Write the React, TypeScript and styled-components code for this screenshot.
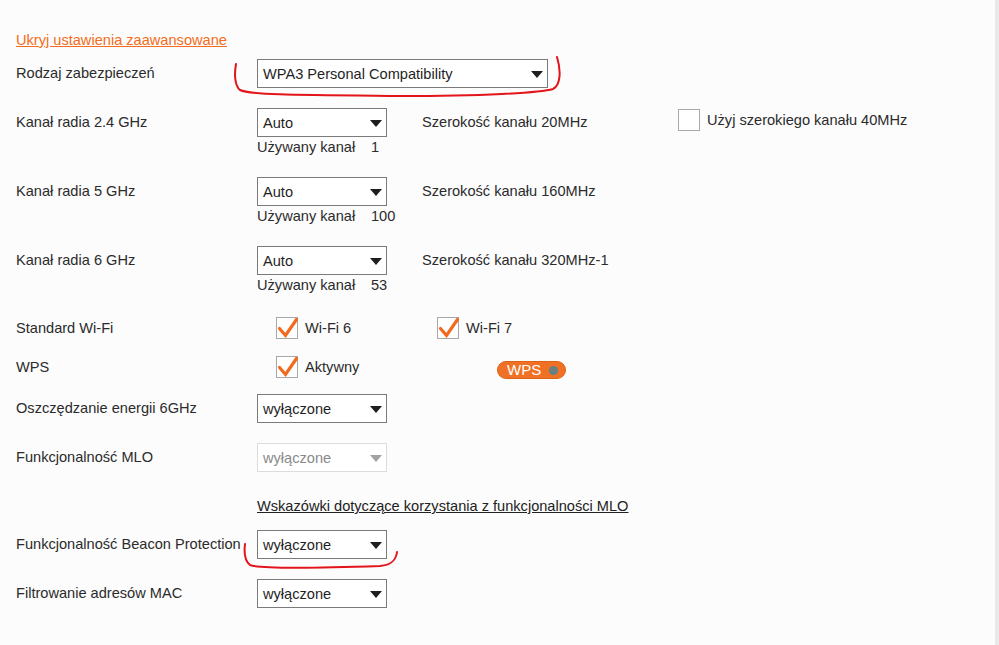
import React from "react";
import styled, { createGlobalStyle } from "styled-components";

const GlobalStyle = createGlobalStyle`
  html, body { margin: 0; padding: 0; }
  body {
    background: #fcfcfc;
    font-family: "Liberation Sans", Arial, sans-serif;
    font-size: 14.6px;
    color: #2b2b2b;
  }
`;

const Page = styled.div`
  position: relative;
  box-sizing: border-box;
  width: 999px;
  min-height: 645px;
  padding: 32px 0 0 16px;
  border-right: 4px solid #e9e9e9;
`;

const AdvancedLink = styled.a`
  display: block;
  line-height: 16px;
  color: #f36c21;
  text-decoration: underline;
  cursor: pointer;
  width: max-content;
`;

const Row = styled.div<{ $gap: number }>`
  display: grid;
  grid-template-columns: 241px 1fr;
  align-items: start;
  margin-top: ${(p) => p.$gap}px;
`;

const Label = styled.div<{ $lh?: number }>`
  line-height: ${(p) => p.$lh ?? 29}px;
  color: #2b2b2b;
  white-space: nowrap;
`;

const Controls = styled.div`
  display: flex;
  align-items: flex-start;
`;

const SelectCol = styled.div`
  width: 165px;
  flex: none;
`;

const SelectBox = styled.div<{ $width: number; $disabled?: boolean }>`
  box-sizing: border-box;
  width: ${(p) => p.$width}px;
  height: 29px;
  display: flex;
  align-items: center;
  justify-content: space-between;
  padding: 0 4px 0 5px;
  background: #fff;
  border: 1px solid ${(p) => (p.$disabled ? "#dcdcdc" : "#7b7b7b")};
  color: ${(p) => (p.$disabled ? "#8a8a8a" : "#1f1f1f")};
`;

const Arrow = styled.span<{ $disabled?: boolean }>`
  width: 0;
  height: 0;
  border-left: 6.5px solid transparent;
  border-right: 6.5px solid transparent;
  border-top: 7px solid ${(p) => (p.$disabled ? "#a3a3a3" : "#1e1e1e")};
  margin-top: 1px;
`;

const UsedChannel = styled.div`
  display: flex;
  line-height: 20px;
`;

const UsedLabel = styled.span`
  width: 114px;
`;

const InfoText = styled.div`
  width: 256px;
  flex: none;
  line-height: 29px;
`;

const CheckItem = styled.label<{ $indent?: number; $width?: number }>`
  display: flex;
  align-items: center;
  gap: 7px;
  margin-left: ${(p) => p.$indent ?? 0}px;
  width: ${(p) => (p.$width ? `${p.$width}px` : "auto")};
  flex: none;
  line-height: 24px;
`;

const CheckBox = styled.span`
  position: relative;
  box-sizing: border-box;
  flex: none;
  width: 22px;
  height: 22px;
  background: #fff;
  border: 1px solid #a8a8a8;
`;

const CheckMark = styled.svg`
  position: absolute;
  left: -1px;
  top: -1px;
  overflow: visible;
`;

const WpsBadge = styled.div`
  display: flex;
  align-items: center;
  gap: 8px;
  box-sizing: border-box;
  height: 18px;
  margin-top: 6px;
  padding: 0 7px 0 9px;
  border-radius: 9px;
  background: #f07125;
  border: 1px solid #dc6418;
  color: #fff;
  font-size: 15px;
  line-height: 16px;
`;

const WpsDot = styled.span`
  width: 9px;
  height: 9px;
  box-sizing: border-box;
  border-radius: 50%;
  background: #6f7c82;
  border: 1.5px solid #3f8c96;
`;

const HelpLink = styled.a`
  display: block;
  margin: 24px 0 0 241px;
  line-height: 20px;
  color: #222;
  text-decoration: underline;
  width: max-content;
  cursor: pointer;
`;

const Annotations = styled.svg`
  position: absolute;
  left: 0;
  top: 0;
  pointer-events: none;
`;

const Select = ({
  value,
  width = 130,
  disabled,
}: {
  value: string;
  width?: number;
  disabled?: boolean;
}) => (
  <SelectBox $width={width} $disabled={disabled}>
    <span>{value}</span>
    <Arrow $disabled={disabled} />
  </SelectBox>
);

const Check = ({ checked }: { checked?: boolean }) => (
  <CheckBox>
    {checked && (
      <CheckMark width={22} height={22} viewBox="0 0 22 22">
        <path
          d="M3.5 11.5 L9.5 18.5 L20.5 2.5"
          fill="none"
          stroke="#f26a1b"
          strokeWidth="3.2"
          strokeLinecap="round"
          strokeLinejoin="miter"
        />
      </CheckMark>
    )}
  </CheckBox>
);

const radios = [
  { label: "Kanał radia 2.4 GHz", width: "Szerokość kanału 20MHz", used: "1", wide: true },
  { label: "Kanał radia 5 GHz", width: "Szerokość kanału 160MHz", used: "100", wide: false },
  { label: "Kanał radia 6 GHz", width: "Szerokość kanału 320MHz-1", used: "53", wide: false },
];

export default function App() {
  return (
    <>
      <GlobalStyle />
      <Page>
        <AdvancedLink>Ukryj ustawienia zaawansowane</AdvancedLink>

        <Row $gap={11}>
          <Label>Rodzaj zabezpieczeń</Label>
          <Controls>
            <Select value="WPA3 Personal Compatibility" width={291} />
          </Controls>
        </Row>

        {radios.map((r) => (
          <Row key={r.label} $gap={20}>
            <Label>{r.label}</Label>
            <Controls>
              <SelectCol>
                <Select value="Auto" />
                <UsedChannel>
                  <UsedLabel>Używany kanał</UsedLabel>
                  <span>{r.used}</span>
                </UsedChannel>
              </SelectCol>
              <InfoText>{r.width}</InfoText>
              {r.wide && (
                <CheckItem>
                  <Check />
                  <span>Użyj szerokiego kanału 40MHz</span>
                </CheckItem>
              )}
            </Controls>
          </Row>
        ))}

        <Row $gap={21}>
          <Label $lh={24}>Standard Wi-Fi</Label>
          <Controls>
            <CheckItem $indent={19} $width={161}>
              <Check checked />
              <span>Wi-Fi 6</span>
            </CheckItem>
            <CheckItem>
              <Check checked />
              <span>Wi-Fi 7</span>
            </CheckItem>
          </Controls>
        </Row>

        <Row $gap={15}>
          <Label $lh={24}>WPS</Label>
          <Controls>
            <CheckItem $indent={19} $width={221}>
              <Check checked />
              <span>Aktywny</span>
            </CheckItem>
            <WpsBadge>
              <span>WPS</span>
              <WpsDot />
            </WpsBadge>
          </Controls>
        </Row>

        <Row $gap={15}>
          <Label>Oszczędzanie energii 6GHz</Label>
          <Controls>
            <Select value="wyłączone" />
          </Controls>
        </Row>

        <Row $gap={20}>
          <Label>Funkcjonalność MLO</Label>
          <Controls>
            <Select value="wyłączone" disabled />
          </Controls>
        </Row>

        <HelpLink>Wskazówki dotyczące korzystania z funkcjonalności MLO</HelpLink>

        <Row $gap={14}>
          <Label>Funkcjonalność Beacon Protection</Label>
          <Controls>
            <Select value="wyłączone" />
          </Controls>
        </Row>

        <Row $gap={20}>
          <Label>Filtrowanie adresów MAC</Label>
          <Controls>
            <Select value="wyłączone" />
          </Controls>
        </Row>

        <Annotations width={999} height={645} viewBox="0 0 999 645">
          <path
            d="M236 64 C234 75 235 86 240 90 C250 95 300 95 400 96 C480 96 540 93 553 89 C561 85 561 70 557 57"
            fill="none"
            stroke="#e3141a"
            strokeWidth="2"
            strokeLinecap="round"
          />
          <path
            d="M245 544 C244 552 245 561 250 565 C260 569 320 568 380 566 C392 565 396 560 397 552"
            fill="none"
            stroke="#e3141a"
            strokeWidth="2"
            strokeLinecap="round"
          />
        </Annotations>
      </Page>
    </>
  );
}
